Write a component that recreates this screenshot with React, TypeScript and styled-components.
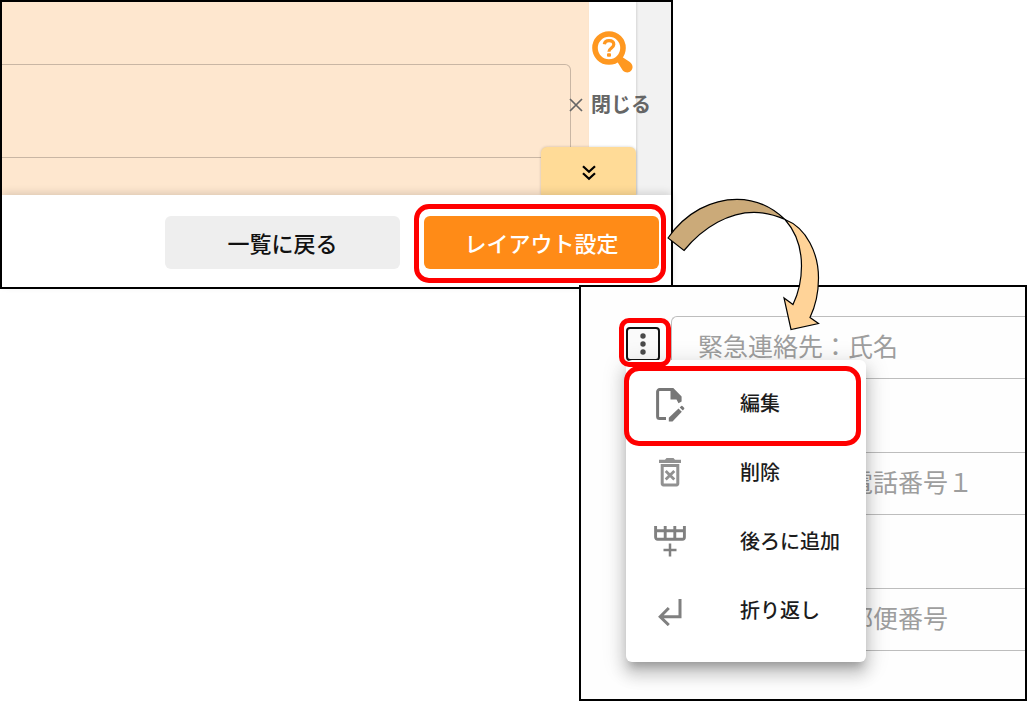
import React from "react";
import styled, { createGlobalStyle } from "styled-components";

const GlobalStyle = createGlobalStyle`
  *, *::before, *::after { box-sizing: border-box; }
  body {
    margin: 0;
    background: #fff;
    font-family: "Noto Sans CJK JP", "Noto Sans", sans-serif;
  }
  button, input, textarea { font-family: inherit; }
`;

const Page = styled.main`
  position: relative;
  display: grid;
  grid-template-columns: minmax(0, 1fr) 94px 354px;
`;

const Panel = styled.section`
  position: relative;
  border: 2px solid #000;
  background: #fff;
`;

const EditorPanel = styled(Panel)`
  grid-column: 1 / 3;
  grid-row: 1;
`;

const LayoutPanel = styled(Panel)`
  z-index: 1;
  grid-column: 2 / 4;
  grid-row: 2;
  margin-top: -4px;
  padding: 29px 0 48px;
  display: flex;
  flex-direction: column;
  gap: 73px;
  background: #fefefe;
  overflow: hidden;
`;

const EditorBody = styled.div`
  position: relative;
  display: flex;
  background: #f2f2f2;
`;

const FormArea = styled.div`
  flex: 1;
  padding: 62px 18px 37px 0;
  background: #fee7cf;
`;

const FormBox = styled.textarea`
  display: block;
  width: 100%;
  height: 94px;
  resize: none;
  outline: none;
  background: transparent;
  border: 1px solid #c9b6a4;
  border-left: 0;
  border-radius: 0 6px 6px 0;
`;

const SheetMargin = styled.div`
  width: 47px;
  margin-right: 35px;
  background: #fff;
  box-shadow: 1px 0 2px rgba(0, 0, 0, 0.12);
`;

const Dock = styled.div`
  position: absolute;
  right: 20px;
  bottom: 0;
  width: 110px;
  display: flex;
  flex-direction: column;
  align-items: flex-end;
`;

const PlainButton = styled.button`
  display: flex;
  align-items: center;
  padding: 0;
  border: 0;
  background: none;
  cursor: pointer;
`;

const HelpButton = styled(PlainButton)`
  margin: 0 17px 16px 0;
`;

const CloseButton = styled(PlainButton)`
  gap: 8px;
  margin-bottom: 28px;
  color: #666;
  font-size: 20px;
  line-height: 30px;
  font-weight: 700;
`;

const CollapseTab = styled(PlainButton)`
  justify-content: center;
  width: 95px;
  height: 48px;
  margin-right: 15px;
  padding-top: 3px;
  border-radius: 6px 6px 0 0;
  background: #ffdb97;
  box-shadow: 0 0 3px rgba(0, 0, 0, 0.2);
`;

const Footer = styled.footer`
  position: relative;
  display: flex;
  justify-content: flex-end;
  gap: 24px;
  padding: 21px 12px 18px;
  background: #fff;
  box-shadow: 0 -2px 8px rgba(0, 0, 0, 0.14);
`;

const ActionButton = styled.button<{ $primary?: boolean }>`
  width: 100%;
  height: 53px;
  padding: 0 0 2px;
  border: 0;
  border-radius: 6px;
  background: ${(p) => (p.$primary ? "#ff8b17" : "#eee")};
  color: ${(p) => (p.$primary ? "#fff" : "#111")};
  font-size: 22px;
  font-weight: 500;
  line-height: 30px;
  cursor: pointer;
`;

const ActionSlot = styled.div`
  position: relative;
  width: 235px;
`;

const Highlight = styled.span<{ $inset: string; $radius: number }>`
  position: absolute;
  z-index: 3;
  inset: ${(p) => p.$inset};
  border: 5px solid #f00;
  border-radius: ${(p) => p.$radius}px;
  pointer-events: none;
`;

const FieldRow = styled.div`
  display: flex;
`;

const Gutter = styled.div`
  width: 90px;
  padding: 11px 0 0 45px;
`;

const FieldInput = styled.input`
  flex: 1;
  min-width: 0;
  height: 63px;
  padding: 0 0 6px 26px;
  border: 1px solid #bdbdbd;
  border-right: 0;
  border-radius: 6px 0 0 6px;
  background: transparent;
  outline: none;
  font-size: 25px;
  font-weight: 400;
  &::placeholder { color: #9e9e9e; opacity: 1; }
`;

const MenuAnchor = styled.div`
  position: relative;
  width: 34px;
`;

const KebabButton = styled(PlainButton)`
  justify-content: center;
  width: 34px;
  height: 34px;
  border: 2px solid #111;
  border-radius: 4px;
  background: #fafafa;
`;

const Menu = styled.ul`
  position: absolute;
  z-index: 2;
  top: 33px;
  left: 0;
  width: 240px;
  margin: 0;
  padding: 9px 0 17px;
  list-style: none;
  border-radius: 6px;
  background: #fff;
  box-shadow: 0 8px 8px -4px rgba(0, 0, 0, 0.22),
    0 12px 15px 2px rgba(0, 0, 0, 0.14), 0 5px 22px 4px rgba(0, 0, 0, 0.12);
`;

const MenuItem = styled.li`
  position: relative;
`;

const MenuButton = styled(PlainButton)`
  width: 100%;
  height: 69px;
  padding-left: 24px;
  color: #1c1c1c;
  font-size: 20px;
  font-weight: 500;
`;

const MenuIcon = styled.span`
  display: flex;
  justify-content: center;
  width: 40px;
  margin-right: 50px;
`;

const MenuLabel = styled.span`
  padding-bottom: 2px;
  line-height: 30px;
`;

const ArrowDrawing = styled.svg`
  position: absolute;
  z-index: 4;
  top: 190px;
  right: 202px;
  pointer-events: none;
`;

const HelpIcon = () => (
  <svg width="42" height="42" viewBox="0 0 42 42" fill="none" aria-hidden="true">
    <circle cx="17" cy="17" r="14" stroke="#ff9820" strokeWidth="5.6" />
    <path d="M29.5 25.5l8.300 5.500c6 4.500 1.200 12.500-4.800 10-1.300-.6-2.200-1.500-3-2.800L24.500 29.500z" fill="#ff9820" />
    <path d="M12.300 13.300c.4-2.400 2.200-3.600 4.700-3.600 2.800 0 4.800 1.400 4.800 3.900 0 3.300-4.900 3.500-4.900 7.200" stroke="#ff9820" strokeWidth="3.200" />
    <rect x="15" y="22.300" width="4" height="3.500" rx="1" fill="#ff9820" />
  </svg>
);

const CrossIcon = () => (
  <svg width="14" height="16" viewBox="0 0 14 16" stroke="#666" strokeWidth="1.7" aria-hidden="true">
    <path d="M1 3l12 12M13 3L1 15" />
  </svg>
);

const ChevronsIcon = () => (
  <svg width="14" height="16" viewBox="0 0 14 16" fill="none" stroke="#000" strokeWidth="2.2" aria-hidden="true">
    <path d="M1 1.300l6 5.500 6-5.500M1 8.300l6 5.500 6-5.500" />
  </svg>
);

const DotsIcon = () => (
  <svg width="6" height="22" viewBox="0 0 6 22" fill="#4a4a4a" aria-hidden="true">
    <circle cx="3" cy="3" r="2.7" />
    <circle cx="3" cy="11" r="2.7" />
    <circle cx="3" cy="19" r="2.7" />
  </svg>
);

const EditIcon = () => (
  <svg width="30" height="36" viewBox="-1 -2 30 36" aria-hidden="true">
    <path d="M10 30.500H3.600a2 2 0 0 1-2-2V3.600a2 2 0 0 1 2-2H16" fill="none" stroke="#777" strokeWidth="3" />
    <path d="M14.500 0H17.300L25.600 8.600V13.500L22.500 15.200L20.500 11.500H14.500z" fill="#777" />
    <path d="M12.800 33.500v-3.800L22.500 20.500l3.300 3.300-9.300 9.700z" fill="#777" />
    <path d="M23.700 19.400l1.500-1.300q.6-.5 1.200 0l1.700 1.700q.5.600 0 1.200l-1.300 1.500z" fill="#777" />
  </svg>
);

const DeleteIcon = () => (
  <svg width="22" height="29" viewBox="0 0 22 29" aria-hidden="true">
    <path d="M0 1.700h6L7.500 0h7L16 1.700h6V5H0z" fill="#919191" />
    <path d="M3.200 7.600h15.600v18a1.300 1.300 0 0 1-1.300 1.300h-13a1.300 1.300 0 0 1-1.300-1.300z" fill="none" stroke="#919191" strokeWidth="3" />
    <path d="M6.700 13l8.600 8.600M15.300 13l-8.600 8.600" stroke="#919191" strokeWidth="2.8" />
  </svg>
);

const AddAfterIcon = () => (
  <svg width="32" height="31" viewBox="0 0 32 31" fill="none" stroke="#808080" strokeWidth="2.5" aria-hidden="true">
    <path d="M1.600 0v11.200a2 2 0 0 0 2 2h24.800a2 2 0 0 0 2-2V0M1.600 4.800h28.800M11.200 0v13M20.800 0v13" strokeWidth="2.9" />
    <path d="M9.500 24h13M16 17.500v13" />
  </svg>
);

const ReturnIcon = () => (
  <svg width="24" height="30" viewBox="0 -3 24 30" fill="none" stroke="#808080" strokeWidth="3" aria-hidden="true">
    <path d="M22 0v17.700H3M10.800 9L2.200 17.700l8.600 8.400" />
  </svg>
);

const CurvedArrow = () => (
  <ArrowDrawing width="165" height="145" viewBox="0 0 165 145" stroke="#000" strokeWidth="1.2" aria-hidden="true">
    <path fill="#cbaa79" d="M8 48C26 22 52 9.300 77 9.300C96 9.300 112 17 125 29.500C115 25 105 22.300 94 22.300C70 22.300 44 36 24 60.500Z" />
    <path fill="#ffd398" d="M125 29.500C147 38 158.500 64 158.500 88C158.500 103 155 117 150 127.500L158.500 133.500L131 139.500L124 108L133 114.500C139 102 141.500 90 141.500 76C141.500 58 136 42 125 29.500Z" />
  </ArrowDrawing>
);

const menuEntries = [
  { label: "編集", icon: <EditIcon />, marked: true },
  { label: "削除", icon: <DeleteIcon /> },
  { label: "後ろに追加", icon: <AddAfterIcon /> },
  { label: "折り返し", icon: <ReturnIcon /> },
];

const fields = [
  "緊急連絡先：氏名",
  "緊急連絡先：電話番号１",
  "緊急連絡先：郵便番号",
];

const ItemMenu = () => (
  <MenuAnchor>
    <KebabButton type="button" aria-label="メニュー" aria-expanded="true">
      <DotsIcon />
    </KebabButton>
    <Menu>
      {menuEntries.map((entry) => (
        <MenuItem key={entry.label}>
          <MenuButton type="button">
            <MenuIcon>{entry.icon}</MenuIcon>
            <MenuLabel>{entry.label}</MenuLabel>
          </MenuButton>
          {entry.marked && <Highlight $inset="-3px 5px -8px -2px" $radius={15} />}
        </MenuItem>
      ))}
    </Menu>
    <Highlight $inset="-9px -11px -6px -7px" $radius={10} />
  </MenuAnchor>
);

export default function App() {
  return (
    <>
      <GlobalStyle />
      <Page>
        <EditorPanel>
          <EditorBody>
            <FormArea>
              <FormBox aria-label="入力欄" />
            </FormArea>
            <SheetMargin />
            <Dock>
              <HelpButton type="button" aria-label="ヘルプ">
                <HelpIcon />
              </HelpButton>
              <CloseButton type="button">
                <CrossIcon />
                閉じる
              </CloseButton>
              <CollapseTab type="button" aria-label="折りたたむ">
                <ChevronsIcon />
              </CollapseTab>
            </Dock>
          </EditorBody>
          <Footer>
            <ActionSlot>
              <ActionButton type="button">一覧に戻る</ActionButton>
            </ActionSlot>
            <ActionSlot>
              <ActionButton type="button" $primary>
                レイアウト設定
              </ActionButton>
              <Highlight $inset="-12px -7px -14px -10px" $radius={15} />
            </ActionSlot>
          </Footer>
        </EditorPanel>

        <LayoutPanel>
          {fields.map((label, index) => (
            <FieldRow key={label}>
              <Gutter>{index === 0 && <ItemMenu />}</Gutter>
              <FieldInput type="text" placeholder={label} aria-label={label} />
            </FieldRow>
          ))}
        </LayoutPanel>
        <CurvedArrow />
      </Page>
    </>
  );
}
